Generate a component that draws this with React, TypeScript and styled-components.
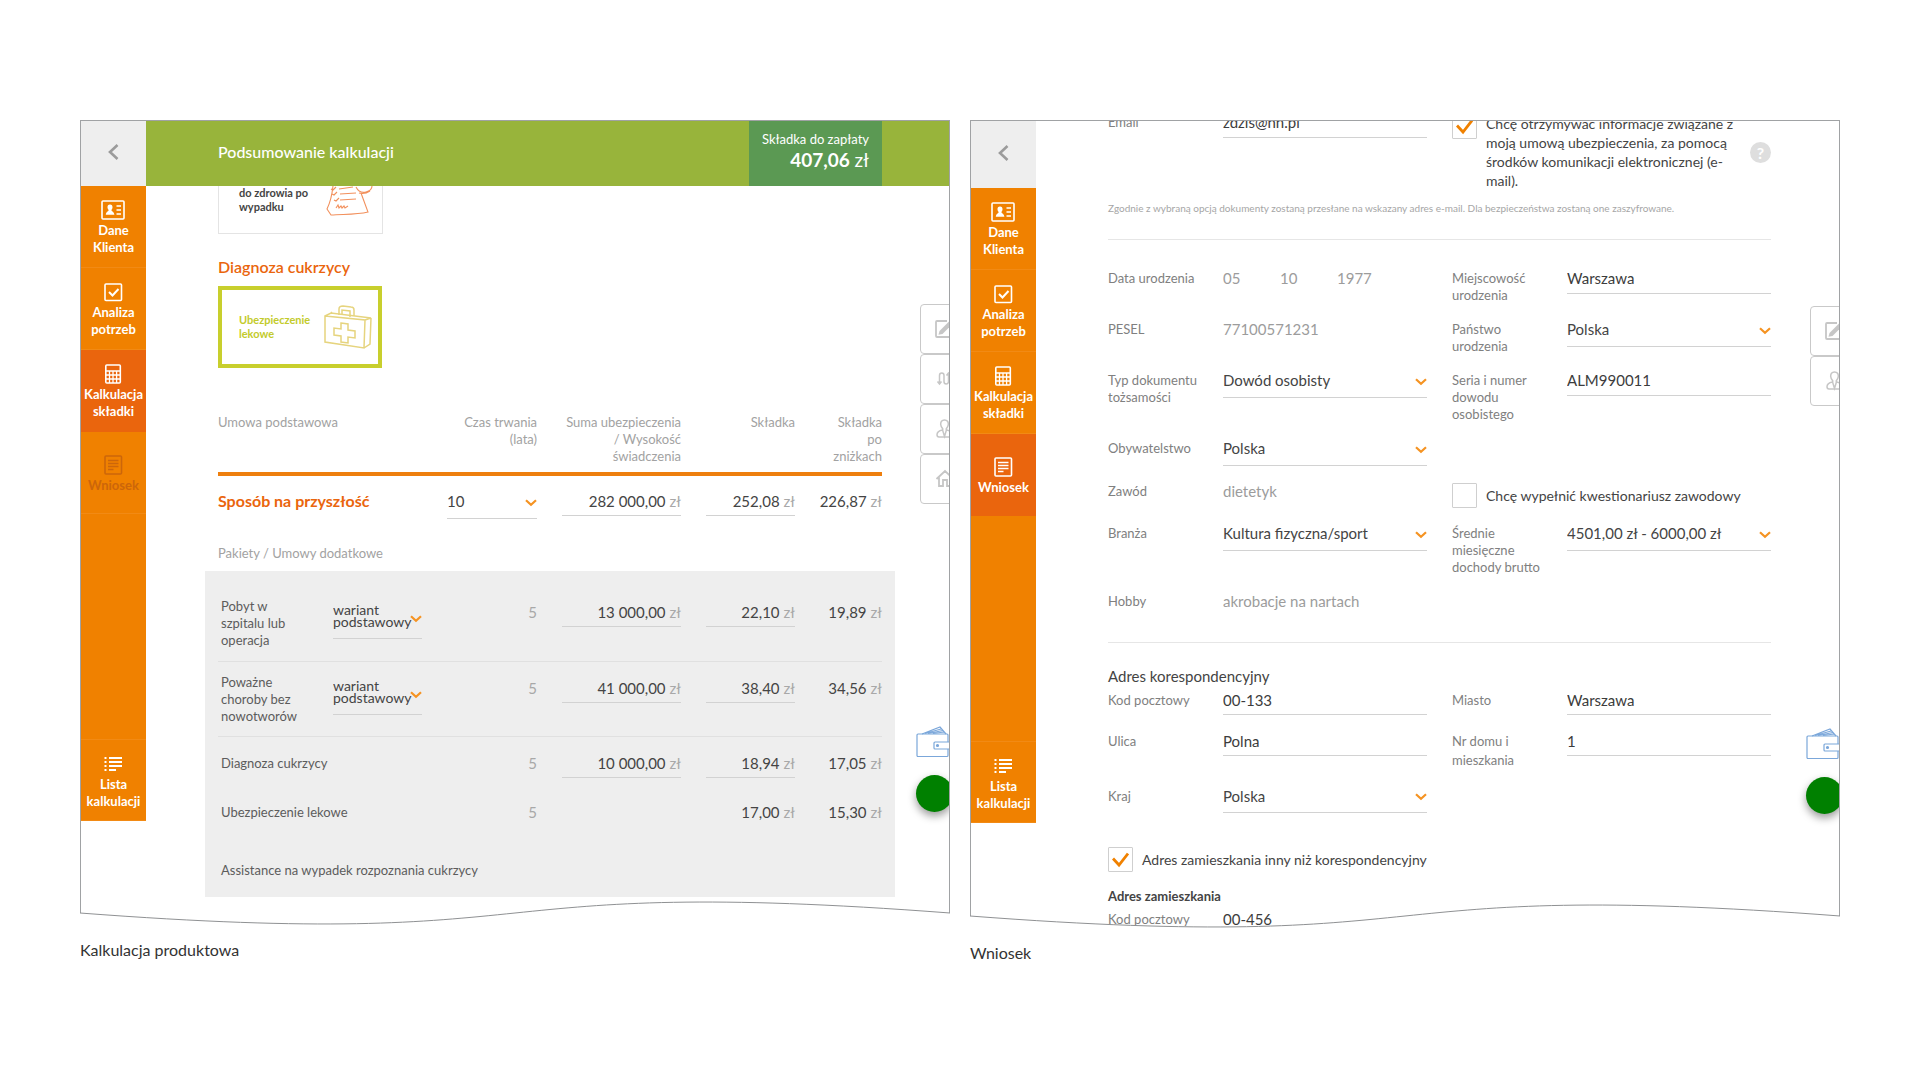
import React from "react";
import styled, { createGlobalStyle, css } from "styled-components";

const GlobalStyle = createGlobalStyle`
  *, *::before, *::after { box-sizing: border-box; }
  body {
    margin: 0;
    background: #ffffff;
    color: #444444;
    font-family: Lato, "Liberation Sans", sans-serif;
    font-size: 15px;
    line-height: 17px;
  }
  h1, h2, h3, p, figure { margin: 0; padding: 0; border: 0; }
  button, input, select { font: inherit; color: inherit; border-radius: 0; margin: 0; }
`;

/* ---------- page ---------- */

const Page = styled.main`
  display: grid;
  grid-template-columns: 1fr 1fr;
  align-items: start;
  gap: 20px;
  padding: 120px 80px 80px;
`;

const Frame = styled.div`
  position: relative;
`;

const Screen = styled.div`
  position: relative;
  display: grid;
  grid-template-columns: 65px minmax(0, 1fr);
  border: 1px solid #a0a2a4;
  overflow: hidden;
`;

const WaveSvg = styled.svg`
  position: absolute;
  left: 0;
  bottom: 0;
  width: 100%;
  height: 24px;
  display: block;
`;

const Caption = styled.figcaption`
  margin-top: 15px;
  font-size: 16px;
  line-height: 20px;
  color: #333333;
`;

const Wave = () => (
  <WaveSvg viewBox="0 0 870 24" preserveAspectRatio="none" aria-hidden="true">
    <path d="M0 12C500 50 370-26 870 12V25H0Z" fill="#fff" />
    <path d="M0 12C500 50 370-26 870 12" fill="none" stroke="#8f9193" vectorEffect="non-scaling-stroke" />
  </WaveSvg>
);

/* ---------- sidebar ---------- */

const Sidebar = styled.div`
  display: flex;
  flex-direction: column;
  align-self: start;
`;

const BackButton = styled.button<{ $tall?: boolean }>`
  height: ${(p) => (p.$tall ? 67 : 65)}px;
  display: grid;
  place-items: center;
  border: 0;
  padding: 0 2px 3px 0;
  background: #eeeeee;
  color: #9b9b9b;
`;

const Nav = styled.nav`
  display: flex;
  flex-direction: column;
  height: 635px;
  background: #f08100;
`;

const NavItem = styled.a<{ $active?: boolean; $muted?: boolean; $last?: boolean }>`
  height: 82px;
  display: flex;
  flex-direction: column;
  align-items: center;
  justify-content: center;
  gap: 2px;
  padding-top: 3px;
  border-bottom: 1px solid ${(p) => (p.$active ? "#ea650d" : "#f28a14")};
  background: ${(p) => (p.$active ? "#ea650d" : "transparent")};
  color: ${(p) => (p.$muted ? "#cc660a" : "#ffffff")};
  font-size: 13px;
  font-weight: 700;
  line-height: 17px;
  text-align: center;
  text-decoration: none;
  ${(p) => p.$last && css`margin-top: auto; border-top: 1px solid #f28a14;`}
  svg { flex: none; overflow: visible; }
`;

const NavIcon = ({ children }: { children: React.ReactNode }) => (
  <svg width="24" height="20" viewBox="1 0 24 20" fill="none" stroke="currentColor" strokeWidth="1.6" aria-hidden="true">
    {children}
  </svg>
);

const ClientIcon = () => (
  <NavIcon>
    <rect x="1" y="1" width="22" height="18" rx="1" />
    <path d="M9 4.500c1.800 0 2.600 1.200 2.500 3-.1 1.200-.6 2-1.100 2.500.1 1.600 2.600 1.400 3 4.800H4.800c.3-3.400 2.700-3.200 2.900-4.800C7 9.400 6.600 8.600 6.500 7.500 6.400 5.700 7.200 4.500 9 4.500Z" fill="currentColor" stroke="none" />
    <path d="M15.500 6h4.500M15.500 10h4.500M15.500 14h4.500" />
  </NavIcon>
);
const NeedsIcon = () => (
  <NavIcon>
    <rect x="4" y="2" width="16.500" height="16.500" rx="1" />
    <path d="m8 10 3.500 3.500 6-6.500" strokeWidth="2" />
  </NavIcon>
);
const CalcIcon = () => (
  <NavIcon>
    <rect x="4.800" y="1" width="14.500" height="18" rx="1" />
    <path d="M5 7h14M5 11h14M5 15h14M8.500 7v12M12 7v12M15.600 7v12" strokeWidth="1.300" />
  </NavIcon>
);
const FormIcon = () => (
  <NavIcon>
    <rect x="4" y="1" width="16.500" height="18" rx="1" />
    <path d="M7 5.500h10.500M7 8.500h10.500M7 11.500h10.500M7 14.500h5.500" />
  </NavIcon>
);
const ListIcon = () => (
  <NavIcon>
    <path d="M3.500 4h2M3.500 8h2M3.500 12h2M3.500 16h2M8 4h13M8 8h13M8 12h13M8 16h7" strokeWidth="2" />
  </NavIcon>
);

function Side({ current }: { current: "calc" | "form" }) {
  const form = current === "form";
  return (
    <Sidebar>
      <BackButton type="button" aria-label="Wstecz" $tall={form}>
        <svg width="12" height="18" viewBox="0 0 12 18" fill="none" stroke="currentColor" strokeWidth="2.600">
          <path d="M10.500 2 3 9l7.500 7" />
        </svg>
      </BackButton>
      <Nav>
        <NavItem href="#dane"><ClientIcon /><span>Dane<br />Klienta</span></NavItem>
        <NavItem href="#analiza"><NeedsIcon /><span>Analiza<br />potrzeb</span></NavItem>
        <NavItem href="#kalkulacja" $active={!form}><CalcIcon /><span>Kalkulacja<br />składki</span></NavItem>
        <NavItem href="#wniosek" $active={form} $muted={!form}><FormIcon /><span>Wniosek</span></NavItem>
        <NavItem href="#lista" $last><ListIcon /><span>Lista<br />kalkulacji</span></NavItem>
      </Nav>
    </Sidebar>
  );
}

/* ---------- floating tools on the right edge ---------- */

const Tools = styled.div<{ $low?: boolean }>`
  position: absolute;
  top: ${(p) => (p.$low ? 185 : 183)}px;
  right: -21px;
  width: 50px;
  display: flex;
  flex-direction: column;
`;

const ToolButton = styled.button`
  height: 50px;
  display: flex;
  align-items: center;
  padding: 0 0 0 13px;
  border: 1px solid #c9c9c9;
  border-radius: 4px;
  background: #ffffff;
  color: #c6c6c6;
`;

const Extras = styled.div<{ $low?: boolean }>`
  position: absolute;
  top: ${(p) => (p.$low ? 607 : 605)}px;
  right: -4px;
  width: 37px;
  display: flex;
  flex-direction: column;
  align-items: flex-start;
  gap: 17px;
`;

const WalletButton = styled.button`
  border: 0;
  padding: 0;
  background: none;
  height: 32px;
  color: #7ba7da;
`;

const GreenDot = styled.button`
  width: 37px;
  height: 37px;
  border: 0;
  border-radius: 50%;
  background: #008000;
  box-shadow: 0 4px 8px rgba(0, 0, 0, 0.4);
`;

const ToolIcon = ({ children }: { children: React.ReactNode }) => (
  <svg width="22" height="22" viewBox="0 0 22 22" fill="none" stroke="currentColor" strokeWidth="1.800" aria-hidden="true">
    {children}
  </svg>
);

const EditTool = () => (
  <ToolButton type="button" aria-label="Edytuj">
    <ToolIcon>
      <path d="M13 3H3a1 1 0 0 0-1 1v14a1 1 0 0 0 1 1h14a1 1 0 0 0 1-1v-6" />
      <path d="M4.500 16.800 5.500 13 16 2.500l3 3L8.500 16Z" fill="currentColor" stroke="none" />
    </ToolIcon>
  </ToolButton>
);
const RouteTool = () => (
  <ToolButton type="button" aria-label="Ścieżka">
    <ToolIcon>
      <path d="M5.500 16V7.500c0-3.300 4.500-3.300 4.500 0v6c0 3.300 4.500 3.300 4.500 0V5M3.500 13.500l2 2.500 2-2.500M12.500 7.500l2-2.500 2 2.500" strokeWidth="1.500" />
    </ToolIcon>
  </ToolButton>
);
const PersonTool = () => (
  <ToolButton type="button" aria-label="Klient">
    <ToolIcon>
      <path d="M10.500 2c-2.800 0-4 2-3.800 4.500.1 1.800 1.200 3.300 2 4.300v1.700l1.800 6 1.800-6v-1.700c.8-1 1.900-2.500 2-4.300.2-2.500-1-4.500-3.800-4.500Z" strokeWidth="1.500" />
      <path d="M8.500 12c-3 .6-5.500 1.800-5.500 4.800 0 1.500.8 2.200 2 2.200h11c1.200 0 2-.7 2-2.200 0-3-2.500-4.200-5.500-4.800" strokeWidth="1.500" />
    </ToolIcon>
  </ToolButton>
);
const HomeTool = () => (
  <ToolButton type="button" aria-label="Dom">
    <ToolIcon>
      <path d="m2.500 11 8.500-8 8.500 8M5 9.500V18h4v-6h4v6h4V9.500" />
    </ToolIcon>
  </ToolButton>
);

const EdgeExtras = ({ low }: { low?: boolean }) => (
  <Extras $low={low}>
    <WalletButton type="button" aria-label="Portfel">
      <svg width="35" height="32" viewBox="0 0 35 32" fill="none" stroke="currentColor" strokeWidth="1.200">
        <path d="M6 8 24 1l6 7M9 7.500 25 3M12 7.500 27 4.500M17 7.500l11-1.500" />
        <rect x="1" y="8" width="31" height="22.500" rx="1" />
        <rect x="18" y="16" width="17" height="7" rx="1" fill="#fff" />
        <circle cx="21.500" cy="19.500" r="1" fill="currentColor" />
      </svg>
    </WalletButton>
    <GreenDot type="button" aria-label="Status" />
  </Extras>
);

/* ---------- shared controls ---------- */

const SelectBox = styled.span<{ $wrap?: boolean }>`
  display: grid;
  align-items: center;
  border-bottom: 1px solid #d2d2d2;
  > * { grid-area: 1 / 1; }
  > svg {
    justify-self: end;
    margin-bottom: ${(p) => (p.$wrap ? 3 : 6)}px;
    pointer-events: none;
  }
`;

const NativeSelect = styled.select<{ $wrap?: boolean; $pad?: number }>`
  appearance: none;
  width: 100%;
  min-width: 0;
  border: 0;
  background: transparent;
  padding: 0 0 ${(p) => p.$pad ?? 8}px;
  line-height: inherit;
  ${(p) => p.$wrap && css`
    height: 35px;
    min-height: 0;
    padding-bottom: 0;
    font-size: 14px;
    line-height: 15px;
    white-space: normal;
    overflow: visible;
    @supports (appearance: base-select) {
      appearance: base-select;
      padding-top: 1px;
      line-height: 12px;
      text-align: left;
      &::picker-icon { display: none; }
    }
  `}
`;

type PickProps = { value: string; label?: string; id?: string; wrap?: boolean; pad?: number };
const Pick = ({ value, label, id, wrap, pad }: PickProps) => (
  <SelectBox $wrap={wrap}>
    <NativeSelect id={id} aria-label={label} $wrap={wrap} $pad={pad}>
      <option>{value}</option>
    </NativeSelect>
    <svg width="12" height="8" viewBox="0 0 12 8" fill="none" stroke="#f59322" strokeWidth="2.200" aria-hidden="true">
      <path d="m1 1.200 5 4.600 5-4.600" />
    </svg>
  </SelectBox>
);

/* ---------- calculation screen ---------- */

const Header = styled.header`
  display: flex;
  align-items: stretch;
  justify-content: space-between;
  height: 65px;
  padding: 0 67px 0 72px;
  background: #98b43b;
  color: #ffffff;
`;

const Title = styled.h1`
  align-self: center;
  padding-bottom: 4px;
  font-size: 16px;
  line-height: 20px;
  font-weight: 500;
`;

const Total = styled.div`
  display: flex;
  flex-direction: column;
  justify-content: center;
  width: 133px;
  padding: 0 13px 4px 0;
  background: #5b9953;
  font-size: 13px;
  text-align: right;
`;

const TotalValue = styled.p`
  font-size: 19px;
  line-height: 24px;
  b { font-weight: 700; }
`;

const CalcBody = styled.div`
  padding: 0 54px 27px 59px;
`;

const Inset = styled.div`
  padding: 0 13px;
`;

const Product = styled.button<{ $selected?: boolean }>`
  display: flex;
  align-items: ${(p) => (p.$selected ? "center" : "flex-start")};
  justify-content: space-between;
  width: ${(p) => (p.$selected ? 164 : 165)}px;
  height: ${(p) => (p.$selected ? 82 : 48)}px;
  padding: 0 5px 0 ${(p) => (p.$selected ? 17 : 20)}px;
  border: ${(p) => (p.$selected ? "4px solid #c8cf2d" : "1px solid #e4e4e4")};
  ${(p) => !p.$selected && css`border-top: 0; padding-right: 8px;`}
  background: #ffffff;
  color: ${(p) => (p.$selected ? "#c3cb2c" : "#444444")};
  font-size: 11px;
  font-weight: 700;
  line-height: 14px;
  text-align: left;
  svg { flex: none; }
`;

const SectionTitle = styled.h2`
  margin: 22px 0 8px;
  font-size: 16px;
  line-height: 22px;
  font-weight: 600;
  color: #ea650d;
`;

const Table = styled.table`
  width: 100%;
  table-layout: fixed;
  border-collapse: collapse;
`;

const Head = styled.thead`
  color: #a2a2a2;
  font-size: 13px;
  th {
    padding: 46px 0 7px;
    border-bottom: 4px solid #ee7f0e;
    font-weight: 400;
    text-align: right;
    vertical-align: top;
  }
  th:first-child { text-align: left; }
`;

const Row = styled.tr<{ $height: number; $divider?: boolean }>`
  height: ${(p) => p.$height}px;
  border-bottom: ${(p) => (p.$divider ? "1px solid #e0e0e0" : "0")};
  td, th { vertical-align: top; }
`;

const Name = styled.th<{ $tall?: boolean }>`
  padding: ${(p) => (p.$tall ? "12px 30px 0 3px" : "18px 0 0 3px")};
  font-size: 13px;
  font-weight: 400;
  text-align: left;
  color: #5c5c5c;
`;

const MainName = styled.th`
  padding: 16px 0 0;
  font-size: 16px;
  font-weight: 700;
  text-align: left;
  color: #ea650d;
`;

const Cell = styled.td<{ $gap?: boolean; $high?: boolean; $muted?: boolean }>`
  padding: ${(p) => (p.$high ? 17 : 18)}px 0 0 ${(p) => (p.$gap ? 25 : 0)}px;
  text-align: right;
  color: ${(p) => (p.$muted ? "#a8a8a8" : "inherit")};
`;

const Money = styled.span<{ $line?: boolean }>`
  display: flex;
  justify-content: flex-end;
  gap: 4px;
  padding-bottom: 5px;
  border-bottom: 1px solid ${(p) => (p.$line ? "#d2d2d2" : "transparent")};
  small { font-size: 15px; color: #a8a8a8; }
  input {
    flex: 1;
    min-width: 0;
    width: 0;
    padding: 0;
    border: 0;
    background: transparent;
    text-align: right;
    line-height: 17px;
    height: 17px;
  }
`;

const GroupLabel = styled.p`
  margin: 2px 0 9px;
  font-size: 13px;
  line-height: 18px;
  color: #a2a2a2;
`;

const Addons = styled.section`
  padding: 15px 13px 0;
  background: #eeeeee;
`;

const Col = styled.col<{ $width?: number }>`
  width: ${(p) => (p.$width ? `${p.$width}px` : "auto")};
`;

const Columns = () => (
  <colgroup>
    <Col />
    <Col $width={89} />
    <Col $width={115} />
    <Col $width={144} />
    <Col $width={114} />
    <Col $width={87} />
  </colgroup>
);

const Amount = ({ value, label }: { value: string; label: string }) => (
  <Money $line>
    <input defaultValue={value} aria-label={label} />
    <small>zł</small>
  </Money>
);
const Plain = ({ value }: { value: string }) => (
  <Money><span>{value}</span><small>zł</small></Money>
);

const addons = [
  { name: "Pobyt w szpitalu lub operacja", variant: "wariant podstawowy", sum: "13 000,00", fee: "22,10", net: "19,89", height: 75 },
  { name: "Poważne choroby bez nowotworów", variant: "wariant podstawowy", sum: "41 000,00", fee: "38,40", net: "34,56", height: 75 },
  { name: "Diagnoza cukrzycy", sum: "10 000,00", fee: "18,94", net: "17,05", height: 50 },
  { name: "Ubezpieczenie lekowe", fee: "17,00", net: "15,30", height: 58 },
];

const ChecklistArt = () => (
  <svg width="48" height="32" viewBox="0 0 48 32" fill="none" stroke="#f2905c" strokeWidth="1.100" aria-hidden="true">
    <path d="M7 0C6 9 4 17 1 23l4 6c12-1 25 0 37-3L35 7" />
    <path d="M30 1c2 4 6 6 10 5 4-1 6-3 6-6M33 7c4 1 8 0 11-2" />
    <path d="m5 3 2 1 3-3M6 8l2 1 3-3M8 14l2 1 3-3M13 3l14-2M14 8l16-1M14 14l16-1" />
    <path d="m10 22 2-3 1 3 2-2 1 2 2-2 1 2 3-2" />
  </svg>
);

const KitArt = () => (
  <svg width="50" height="46" viewBox="0 0 50 46" fill="none" stroke="#e6d47e" strokeWidth="1.500" aria-hidden="true">
    <path d="M2 12 42 16 41 44 2 38ZM2 12l6-3 40 5-6 2M48 14l-1 26-6 4M8 9l1-1" />
    <path d="M16 11V5c0-2 2-3 4-3l8 1c2 0 3 1 3 3v6M19 11V6l8 1v6" />
    <path d="M18 19l7 1v6l7 1v7l-7-1v6l-7-1v-6l-7-1v-7l7 1Z" />
  </svg>
);

function CalcScreen() {
  return (
    <Screen>
      <Side current="calc" />
      <div>
        <Header>
          <Title>Podsumowanie kalkulacji</Title>
          <Total>
            <p>Składka do zapłaty</p>
            <TotalValue><b>407,06</b> zł</TotalValue>
          </Total>
        </Header>
        <CalcBody>
          <Inset>
            <Product type="button"><span>do zdrowia po<br />wypadku</span><ChecklistArt /></Product>
            <SectionTitle>Diagnoza cukrzycy</SectionTitle>
            <Product type="button" $selected><span>Ubezpieczenie<br />lekowe</span><KitArt /></Product>
            <Table>
              <Columns />
              <Head>
                <tr>
                  <th scope="col" colSpan={2}>Umowa podstawowa</th>
                  <th scope="col">Czas trwania<br />(lata)</th>
                  <th scope="col">Suma ubezpieczenia<br />/ Wysokość<br />świadczenia</th>
                  <th scope="col">Składka</th>
                  <th scope="col">Składka<br />po<br />zniżkach</th>
                </tr>
              </Head>
              <tbody>
                <Row $height={68}>
                  <MainName scope="row" colSpan={2}>Sposób na przyszłość</MainName>
                  <Cell $gap $high><Pick value="10" label="Czas trwania" /></Cell>
                  <Cell $gap $high><Amount value="282 000,00" label="Suma ubezpieczenia" /></Cell>
                  <Cell $gap $high><Amount value="252,08" label="Składka" /></Cell>
                  <Cell $high><Plain value="226,87" /></Cell>
                </Row>
              </tbody>
            </Table>
            <GroupLabel>Pakiety / Umowy dodatkowe</GroupLabel>
          </Inset>
          <Addons>
            <Table>
              <Columns />
              <tbody>
                {addons.map((a, i) => (
                  <Row key={a.name} $height={a.height} $divider={i < 2}>
                    <Name scope="row" $tall={!!a.variant} colSpan={a.variant ? 1 : 2}>{a.name}</Name>
                    {a.variant && <Cell $high><Pick value={a.variant} label={`Wariant: ${a.name}`} wrap /></Cell>}
                    <Cell $muted>5</Cell>
                    <Cell $gap>{a.sum && <Amount value={a.sum} label={`Suma: ${a.name}`} />}</Cell>
                    <Cell $gap>{a.sum ? <Amount value={a.fee} label={`Składka: ${a.name}`} /> : <Plain value={a.fee} />}</Cell>
                    <Cell><Plain value={a.net} /></Cell>
                  </Row>
                ))}
                <Row $height={53}>
                  <Name scope="row" colSpan={6}>Assistance na wypadek rozpoznania cukrzycy</Name>
                </Row>
              </tbody>
            </Table>
          </Addons>
        </CalcBody>
      </div>
      <Tools><EditTool /><RouteTool /><PersonTool /><HomeTool /></Tools>
      <EdgeExtras />
    </Screen>
  );
}

/* ---------- application form screen ---------- */

const Form = styled.form`
  margin: -7px 0 -8px;
  padding: 0 68px 0 72px;
`;

const Fields = styled.div<{ $roomy?: boolean }>`
  display: grid;
  grid-template-columns: 1fr 1fr;
  gap: 17px 25px;
  align-items: start;
  line-height: ${(p) => (p.$roomy ? 19 : 17)}px;
`;

const FieldBox = styled.div`
  display: grid;
  grid-template-columns: 115px minmax(0, 1fr);
  align-items: start;
  > label, > span:first-child {
    max-width: 100px;
    font-size: 13px;
    color: #808080;
  }
`;

const TextInput = styled.input<{ $plain?: boolean; $pad: number; $height: number }>`
  width: 100%;
  min-width: 0;
  height: ${(p) => p.$height}px;
  padding: 0 0 ${(p) => p.$pad}px;
  border: 0;
  border-bottom: ${(p) => (p.$plain ? "0" : "1px solid #d2d2d2")};
  background: transparent;
  color: ${(p) => (p.$plain ? "#9c9c9c" : "#3c3c3c")};
`;

const DateParts = styled.div`
  display: grid;
  grid-template-columns: 57px 57px 60px;
`;

const Divider = styled.hr`
  height: 1px;
  margin: 0;
  border: 0;
  background: #e6e6e6;
`;

const Note = styled.p`
  margin: 10px 0 23px;
  font-size: 10px;
  line-height: 16px;
  color: #a6a6a6;
`;

const Block = styled.section<{ $top: number; $bottom: number }>`
  padding: ${(p) => p.$top}px 0 ${(p) => p.$bottom}px;
`;

const CheckRow = styled.div<{ $multi?: boolean }>`
  display: grid;
  grid-template-columns: 25px minmax(0, 1fr) auto;
  align-items: ${(p) => (p.$multi ? "start" : "center")};
  column-gap: 9px;
  font-size: 14px;
  line-height: 19px;
`;

const CheckBox = styled.span`
  display: grid;
  > * { grid-area: 1 / 1; }
  input {
    appearance: none;
    width: 25px;
    height: 25px;
    border: 1px solid #cfcfcf;
    border-radius: 1px;
    background: #ffffff;
  }
  svg { place-self: center; pointer-events: none; visibility: hidden; }
  input:checked + svg { visibility: visible; }
`;

const Tick = ({ id, checked }: { id: string; checked?: boolean }) => (
  <CheckBox>
    <input id={id} type="checkbox" defaultChecked={checked} />
    <svg width="17" height="16" viewBox="0 0 17 16" fill="none" stroke="#f08100" strokeWidth="2.800" aria-hidden="true">
      <path d="M1 6.500 7 13 16 1.500" />
    </svg>
  </CheckBox>
);

const Help = styled.button`
  align-self: center;
  width: 21px;
  height: 21px;
  padding: 0;
  border: 0;
  border-radius: 50%;
  background: #dedede;
  color: #ffffff;
  font-size: 16px;
  font-weight: 700;
  line-height: 21px;
`;

const LeadTitle = styled.h2`
  font-size: 15px;
  line-height: 19px;
  font-weight: 400;
  margin-bottom: 5px;
`;

const SmallTitle = styled.h3`
  font-size: 13px;
  line-height: 17px;
  font-weight: 700;
  margin: 16px 0 6px;
`;

type FieldProps = { id: string; label: string; value: string; kind?: "text" | "plain" | "select"; roomy?: boolean };
const Field = ({ id, label, value, kind = "text", roomy }: FieldProps) => (
  <FieldBox>
    <label htmlFor={id}>{label}</label>
    {kind === "select" ? (
      <Pick id={id} value={value} pad={roomy ? 6 : 8} />
    ) : (
      <TextInput
        id={id}
        defaultValue={value}
        readOnly={kind === "plain"}
        $plain={kind === "plain"}
        $pad={kind === "plain" ? 0 : roomy ? 6 : 8}
        $height={kind === "plain" ? 17 : 24}
      />
    )}
  </FieldBox>
);

function FormScreen() {
  return (
    <Screen>
      <Side current="form" />
      <Form>
        <Fields>
          <Field id="email" label="Email" value="zdzis@nn.pl" />
          <CheckRow $multi>
            <Tick id="zgoda" checked />
            <label htmlFor="zgoda">
              Chcę otrzymywać informacje związane z moją umową ubezpieczenia, za pomocą środków komunikacji elektronicznej (e-mail).
            </label>
            <Help type="button" aria-label="Pomoc">?</Help>
          </CheckRow>
        </Fields>
        <Note>
          Zgodnie z wybraną opcją dokumenty zostaną przesłane na wskazany adres e-mail. Dla bezpieczeństwa zostaną one zaszyfrowane.
        </Note>
        <Divider />
        <Block $top={30} $bottom={32}>
          <Fields>
            <FieldBox>
              <span id="urodzenie">Data urodzenia</span>
              <DateParts role="group" aria-labelledby="urodzenie">
                <TextInput aria-label="Dzień" defaultValue="05" readOnly $plain $pad={0} $height={17} />
                <TextInput aria-label="Miesiąc" defaultValue="10" readOnly $plain $pad={0} $height={17} />
                <TextInput aria-label="Rok" defaultValue="1977" readOnly $plain $pad={0} $height={17} />
              </DateParts>
            </FieldBox>
            <Field id="miejscowosc" label="Miejscowość urodzenia" value="Warszawa" />
            <Field id="pesel" label="PESEL" value="77100571231" kind="plain" />
            <Field id="panstwo" label="Państwo urodzenia" value="Polska" kind="select" />
            <Field id="dokument" label="Typ dokumentu tożsamości" value="Dowód osobisty" kind="select" />
            <Field id="seria" label="Seria i numer dowodu osobistego" value="ALM990011" />
            <Field id="obywatelstwo" label="Obywatelstwo" value="Polska" kind="select" />
            <span />
            <Field id="zawod" label="Zawód" value="dietetyk" kind="plain" />
            <CheckRow>
              <Tick id="kwestionariusz" />
              <label htmlFor="kwestionariusz">Chcę wypełnić kwestionariusz zawodowy</label>
            </CheckRow>
            <Field id="branza" label="Branża" value="Kultura fizyczna/sport" kind="select" />
            <Field id="dochody" label="Średnie miesięczne dochody brutto" value="4501,00 zł - 6000,00 zł" kind="select" />
            <Field id="hobby" label="Hobby" value="akrobacje na nartach" kind="plain" />
          </Fields>
        </Block>
        <Divider />
        <Block $top={24} $bottom={0}>
          <LeadTitle>Adres korespondencyjny</LeadTitle>
          <Fields $roomy>
            <Field id="kod" label="Kod pocztowy" value="00-133" roomy />
            <Field id="miasto" label="Miasto" value="Warszawa" roomy />
            <Field id="ulica" label="Ulica" value="Polna" roomy />
            <Field id="dom" label="Nr domu i mieszkania" value="1" roomy />
            <Field id="kraj" label="Kraj" value="Polska" kind="select" roomy />
          </Fields>
        </Block>
        <Block $top={34} $bottom={0}>
          <CheckRow>
            <Tick id="inny" checked />
            <label htmlFor="inny">Adres zamieszkania inny niż korespondencyjny</label>
          </CheckRow>
          <SmallTitle>Adres zamieszkania</SmallTitle>
          <Fields>
            <Field id="kod2" label="Kod pocztowy" value="00-456" kind="text" />
          </Fields>
        </Block>
      </Form>
      <Tools $low><EditTool /><PersonTool /></Tools>
      <EdgeExtras low />
    </Screen>
  );
}

export default function App() {
  return (
    <>
      <GlobalStyle />
      <Page>
        <figure>
          <Frame><CalcScreen /><Wave /></Frame>
          <Caption>Kalkulacja produktowa</Caption>
        </figure>
        <figure>
          <Frame><FormScreen /><Wave /></Frame>
          <Caption>Wniosek</Caption>
        </figure>
      </Page>
    </>
  );
}
